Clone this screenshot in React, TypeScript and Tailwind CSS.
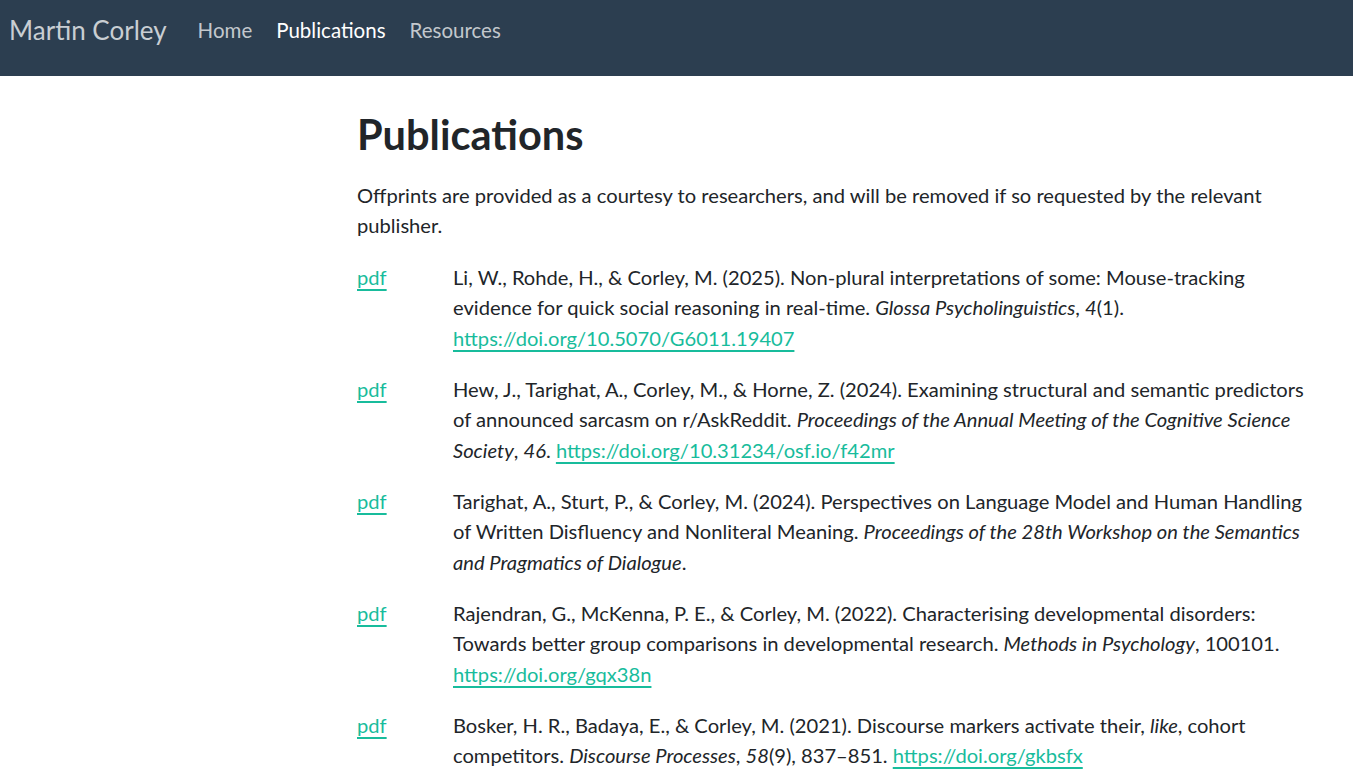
import React from "react";

const doiLink = (href: string) => (
  <a href={href} className="text-[#18bc9c] underline underline-offset-[4px] decoration-[1.5px]">
    {href}
  </a>
);

const pubs: React.ReactNode[] = [
  <>
    Li, W., Rohde, H., &amp; Corley, M. (2025). Non-plural interpretations of some: Mouse-tracking
    evidence for quick social reasoning in real-time. <i>Glossa Psycholinguistics</i>, <i>4</i>(1).{" "}
    {doiLink("https://doi.org/10.5070/G6011.19407")}
  </>,
  <>
    Hew, J., Tarighat, A., Corley, M., &amp; Horne, Z. (2024). Examining structural and semantic predictors
    of announced sarcasm on r/AskReddit.{" "}
    <i>Proceedings of the Annual Meeting of the Cognitive Science Society</i>, <i>46</i>.{" "}
    {doiLink("https://doi.org/10.31234/osf.io/f42mr")}
  </>,
  <>
    Tarighat, A., Sturt, P., &amp; Corley, M. (2024). Perspectives on Language Model and Human Handling
    of Written Disfluency and Nonliteral Meaning.{" "}
    <i>Proceedings of the 28th Workshop on the Semantics and Pragmatics of Dialogue</i>.
  </>,
  <>
    Rajendran, G., McKenna, P. E., &amp; Corley, M. (2022). Characterising developmental disorders:
    Towards better group comparisons in developmental research. <i>Methods in Psychology</i>, 100101.{" "}
    {doiLink("https://doi.org/gqx38n")}
  </>,
  <>
    Bosker, H. R., Badaya, E., &amp; Corley, M. (2021). Discourse markers activate their, <i>like</i>, cohort
    competitors. <i>Discourse Processes</i>, <i>58</i>(9), 837–851. {doiLink("https://doi.org/gkbsfx")}
  </>,
];

export default function App() {
  return (
    <div className="min-h-screen bg-white text-[#212529] font-['Lato','Liberation_Sans',sans-serif]">
      {/* Navbar */}
      <header className="h-[76px] bg-[#2c3e50]">
        <nav className="flex items-center h-[60px] pl-[9px]">
          <span className="text-[26px] text-[#c9ced3] mr-[31px]">Martin Corley</span>
          <ul className="flex gap-[24px] text-[20.5px]">
            <li className="text-[#c3c8cd]">Home</li>
            <li className="text-white">Publications</li>
            <li className="text-[#c3c8cd]">Resources</li>
          </ul>
        </nav>
      </header>

      <div className="flex">
        <div className="w-[357px] shrink-0" />
        <main className="w-[955px] pt-[34px]">
          <h1 className="text-[41.5px] font-bold leading-[1.2] mb-[20px]">Publications</h1>
          <p className="text-[20.15px] leading-[30.5px] mb-[21px]">
            Offprints are provided as a courtesy to researchers, and will be removed if so requested by the relevant
            publisher.
          </p>
          <div className="flex flex-col gap-[20.5px]">
            {pubs.map((p, i) => (
              <div key={i} className="grid grid-cols-[96px_1fr] text-[20.15px] leading-[30.5px]">
                <a href="#" className="text-[#18bc9c] underline underline-offset-[4px] decoration-[1.5px] self-start w-fit">
                  pdf
                </a>
                <div>{p}</div>
              </div>
            ))}
          </div>
        </main>
      </div>
    </div>
  );
}
